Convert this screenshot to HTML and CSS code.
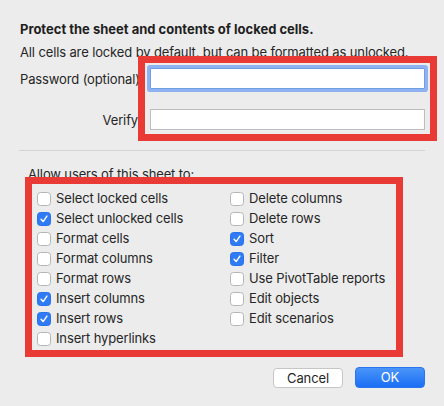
FILE: index.html
```html
<!DOCTYPE html>
<html lang="en">
<head>
<meta charset="utf-8">
<title>Protect Sheet</title>
<link rel="stylesheet" href="styles.css">
</head>
<body>
<div class="dialog">
  <h1 class="title">Protect the sheet and contents of locked cells.</h1>
  <p class="desc">All cells are locked by default, but can be formatted as unlocked.</p>
  <div class="pwgrid">
    <label class="pwlabel">Password (optional)</label>
    <div class="field focus"></div>
    <label class="pwlabel">Verify</label>
    <div class="field"></div>
  </div>
  <div class="sep"></div>
  <p class="allow">Allow users of this sheet to:</p>
  <div class="opts">
    <div class="opt"><span class="cb"></span>Select locked cells</div>
    <div class="opt"><span class="cb"></span>Delete columns</div>
    <div class="opt"><span class="cb on"><svg viewBox="0 0 14 14"><path d="M3.6 7.4 L6 10 L10.4 3.6"/></svg></span>Select unlocked cells</div>
    <div class="opt"><span class="cb"></span>Delete rows</div>
    <div class="opt"><span class="cb"></span>Format cells</div>
    <div class="opt"><span class="cb on"><svg viewBox="0 0 14 14"><path d="M3.6 7.4 L6 10 L10.4 3.6"/></svg></span>Sort</div>
    <div class="opt"><span class="cb"></span>Format columns</div>
    <div class="opt"><span class="cb on"><svg viewBox="0 0 14 14"><path d="M3.6 7.4 L6 10 L10.4 3.6"/></svg></span>Filter</div>
    <div class="opt"><span class="cb"></span>Format rows</div>
    <div class="opt"><span class="cb"></span>Use PivotTable reports</div>
    <div class="opt"><span class="cb on"><svg viewBox="0 0 14 14"><path d="M3.6 7.4 L6 10 L10.4 3.6"/></svg></span>Insert columns</div>
    <div class="opt"><span class="cb"></span>Edit objects</div>
    <div class="opt"><span class="cb on"><svg viewBox="0 0 14 14"><path d="M3.6 7.4 L6 10 L10.4 3.6"/></svg></span>Insert rows</div>
    <div class="opt"><span class="cb"></span>Edit scenarios</div>
    <div class="opt"><span class="cb"></span>Insert hyperlinks</div>
  </div>
  <div class="buttons">
    <div class="btn cancel">Cancel</div>
    <div class="btn ok">OK</div>
  </div>
  <div class="mark mark1"></div>
  <div class="mark mark2"></div>
</div>
</body>
</html>
```
FILE: styles.css
```css
* { box-sizing: border-box; }
html, body {
  margin: 0;
  padding: 0;
  background: #ececec;
}
body {
  width: 444px;
  height: 406px;
  overflow: hidden;
  font-family: Inter, "Noto Sans", "Liberation Sans", sans-serif;
  font-size: 13px;
  letter-spacing: -0.13px;
  color: #262626;
}
.dialog {
  position: relative;
  padding: 21px 19px 0 20px;
  height: 406px;
}
.title {
  margin: 0;
  font-size: 13px;
  font-weight: 700;
  line-height: 16px;
  letter-spacing: 0;
  color: #1f1f1f;
}
.desc {
  margin: 7px 0 0;
  line-height: 16px;
}
.pwgrid {
  display: grid;
  grid-template-columns: 118px 275px;
  column-gap: 12px;
  row-gap: 20px;
  align-items: center;
  margin-top: 8px;
}
.pwlabel {
  text-align: right;
  white-space: nowrap;
  line-height: 16px;
}
.field {
  height: 21px;
  background: #fff;
  border: 1px solid #bdbdbd;
}
.field.focus {
  border: 1px solid #6f9de8;
  box-shadow: 0 0 0 3px #8fb3f0;
  border-radius: 1px;
}
.sep {
  height: 1px;
  background: #d3d3d3;
  margin-top: 20px;
  width: 406px;
  margin-left: -1px;
}
.allow {
  margin: 15px 0 0 8px;
  line-height: 16px;
}
.opts {
  display: grid;
  grid-template-columns: 193px auto;
  grid-auto-rows: 20px;
  margin: 6px 0 0 17px;
}
.opt {
  display: flex;
  align-items: center;
  gap: 5px;
  white-space: nowrap;
}
.cb {
  width: 14px;
  height: 14px;
  border: 1px solid #b5b5b5;
  border-radius: 3.5px;
  background: #fff;
  display: inline-flex;
  align-items: center;
  justify-content: center;
  flex: none;
  margin-top: 1px;
}
.cb.on {
  background: #2f7bf5;
  border-color: #2a72e8;
}
.cb svg {
  width: 14px;
  height: 14px;
  fill: none;
  stroke: #fff;
  stroke-width: 1.7;
  stroke-linecap: round;
  stroke-linejoin: round;
}
.buttons {
  display: flex;
  justify-content: flex-end;
  align-items: center;
  gap: 12px;
  margin-top: 18px;
  width: 405px;
}
.btn {
  width: 70px;
  height: 21px;
  border-radius: 4px;
  display: flex;
  align-items: center;
  justify-content: center;
  line-height: 16px;
}
.cancel {
  background: #fff;
  border: 1px solid #c6c6c6;
  color: #262626;
  height: 20px;
  margin-top: 2px;
}
.ok {
  background: linear-gradient(#4a95f9, #1b6ef4);
  color: #fff;
  border: 1px solid #2a74ee;
}
.mark {
  position: absolute;
  border: 7px solid #ea3a36;
}
.mark1 {
  left: 138px;
  top: 56px;
  width: 299px;
  height: 85px;
}
.mark2 {
  left: 25px;
  top: 177px;
  width: 378px;
  height: 180px;
}
```
